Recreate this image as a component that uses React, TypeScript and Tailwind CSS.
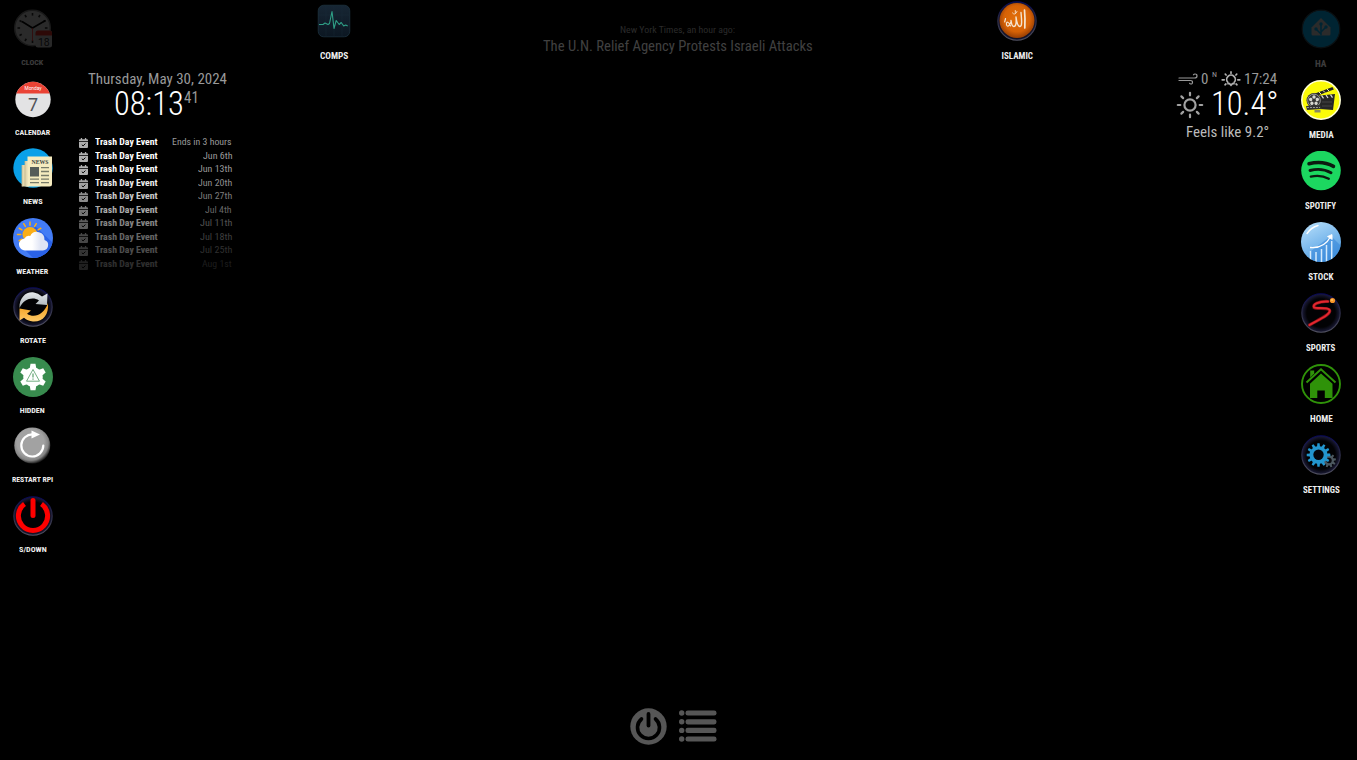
import { useLayoutEffect, useRef, useState, type ReactNode } from "react";

/* One line of text set condensed so that it fills the given width. */
function Fit({ w, className = "", children }: { w: number; className?: string; children: ReactNode }) {
  const ref = useRef<HTMLSpanElement>(null);
  const [scale, setScale] = useState(1);
  useLayoutEffect(() => {
    if (ref.current) setScale(w / ref.current.offsetWidth);
  }, [w]);
  return (
    <span className={`block shrink-0 ${className}`} style={{ width: w }}>
      <span ref={ref} className="inline-block origin-left whitespace-nowrap" style={{ transform: `scaleX(${scale})` }}>
        {children}
      </span>
    </span>
  );
}

function Svg({ children }: { children: ReactNode }) {
  return (
    <svg viewBox="0 0 40 40" className="size-10 shrink-0">
      {children}
    </svg>
  );
}

function DarkDisc({ id, fill = "#020204" }: { id: string; fill?: string }) {
  return (
    <>
      <defs>
        <linearGradient id={id} x1="0" y1="0" x2="0" y2="1">
          <stop offset="0" stopColor="#08085a" />
          <stop offset=".45" stopColor="#2b2b46" />
          <stop offset="1" stopColor="#50505f" />
        </linearGradient>
        <radialGradient id={id + "g"}>
          <stop offset=".74" stopColor={fill} />
          <stop offset="1" stopColor="#1c1c3a" />
        </radialGradient>
      </defs>
      <circle cx="20" cy="20" r="19.2" fill={`url(#${id}g)`} stroke={`url(#${id})`} strokeWidth="1.1" />
    </>
  );
}

const ticks = [0, 30, 60, 90, 120, 150, 180, 210, 240, 270, 300, 330];

const ClockIcon = () => (
  <Svg>
    <circle cx="19.5" cy="19" r="17.8" fill="#a8a8a8" stroke="#666" strokeWidth="1.5" />
    {ticks.map((a) => (
      <path key={a} d="M19.5 4v2.600" stroke="#222" strokeWidth="1.6" transform={`rotate(${a} 19.5 19)`} />
    ))}
    <path d="M9 12.500l10.500 6.500L32.500 11.500" stroke="#000" strokeWidth="1.6" fill="none" />
    <path d="M19.500 19V32" stroke="#c22" strokeWidth=".8" />
    <rect x="22.500" y="21.500" width="16.500" height="17" rx="2.500" fill="#a0a0a0" />
    <path d="M22.500 26.500v-2.500a2.500 2.500 0 0 1 2.500-2.500h11.500a2.500 2.500 0 0 1 2.500 2.500v2.500z" fill="#b3261e" />
    <text x="30.800" y="36.500" fontSize="10.500" textAnchor="middle" fill="#222" fontFamily="Roboto">18</text>
  </Svg>
);

const CalendarIcon = () => (
  <Svg>
    <defs><clipPath id="cal"><circle cx="20" cy="20.500" r="17.700" /></clipPath></defs>
    <g clipPath="url(#cal)">
      <rect width="40" height="40" fill="#e3e3e4" />
      <rect width="40" height="14.500" fill="#ea4335" />
    </g>
    <text x="20" y="11.300" fontSize="4.800" textAnchor="middle" fill="#fff" fontFamily="Roboto">Monday</text>
    <text x="20" y="31.500" fontSize="18" textAnchor="middle" fill="#505257" fontFamily="Roboto">7</text>
  </Svg>
);

const NewsIcon = () => (
  <Svg>
    <circle cx="20" cy="20" r="19.700" fill="#0aa0e8" />
    <path d="M9 17h5v21.500H9zM12 13h4v25.500h-4z" fill="#e5d9b0" />
    <path d="M9 17v21.500M12 13v25" stroke="#bfb58d" strokeWidth=".8" />
    <path d="M14.500 8.500H39V36q0 2.500-2.500 2.500H12q2.500 0 2.500-2.500z" fill="#f5ebbf" />
    <text x="27" y="16.200" fontSize="6.600" fontWeight="700" textAnchor="middle" textLength="17" lengthAdjust="spacingAndGlyphs" fill="#39413f" fontFamily="Liberation Serif">NEWS</text>
    <rect x="17" y="19" width="9" height="9.500" fill="#555c59" />
    <path d="M28 19.700h8M28 23.500h8M28 27.500h8M17 31.200h9M17 34.700h9M28 31.200h8M28 34.700h8" stroke="#777a68" strokeWidth="1.300" />
  </Svg>
);

const WeatherIcon = () => (
  <Svg>
    <defs>
      <clipPath id="wc"><circle cx="20" cy="20" r="20" /></clipPath>
      <linearGradient id="cl"><stop offset=".45" stopColor="#fff" /><stop offset=".75" stopColor="#dfe4f4" /></linearGradient>
    </defs>
    <circle cx="20" cy="20" r="20" fill="#437cf5" />
    <path d="M22 8l18 17v15H20l-9-9z" fill="#2a62e8" clipPath="url(#wc)" />
    <circle cx="17" cy="16.500" r="7.500" fill="#fbae17" />
    {[-120, -90, -60, -30, 0, 30, 60].map((a) => (
      <path key={a} d="M17 7.200V4" stroke="#fbae17" strokeWidth="1.500" strokeLinecap="round" transform={`rotate(${a} 17 16.500)`} />
    ))}
    <path d="M12.500 32.500a6 6 0 0 1-1-12 5 5 0 0 1 5.700-2.500 7.600 7.600 0 0 1 14.300 4A5.400 5.400 0 0 1 29.500 32.500z" fill="url(#cl)" />
  </Svg>
);

const RotateIcon = () => (
  <Svg>
    <defs>
      <linearGradient id="ro" x1="0" y1="0" x2="0" y2="1"><stop offset="0" stopColor="#ef9917" /><stop offset="1" stopColor="#ffc966" /></linearGradient>
      <linearGradient id="rs" x1="0" y1="0" x2="0" y2="1"><stop offset="0" stopColor="#e6e9ec" /><stop offset="1" stopColor="#a7b0b5" /></linearGradient>
    </defs>
    <DarkDisc id="rot" />
    <path d="M6.500 21C6 10 14 4 21 5.500q4 .5 8 4L34.500 6.500 34 18 22.500 17l3.500-3.500C20 9.500 11 11.500 6.500 21z" fill="url(#rs)" />
    <path d="M35 16c1 12-5 19-15 18.500-4-.3-6.500-1.600-9-3.700L6.500 33.500V21.500L18 23.500l-4 3.200C21 31.500 31 28 35 16z" fill="url(#ro)" />
  </Svg>
);

const gear = (n: number, cx: number, cy: number, r: number, len: number, w: number, fill: string) => (
  <g fill={fill}>
    <circle cx={cx} cy={cy} r={r} />
    {Array.from({ length: n }, (_, i) => (
      <path
        key={i}
        d={`M${cx - w / 2} ${cy - r + 1}l${w * 0.12} ${-len - 1}h${w * 0.76}l${w * 0.12} ${len + 1}z`}
        transform={`rotate(${(360 / n) * i} ${cx} ${cy})`}
      />
    ))}
  </g>
);

const HiddenIcon = () => (
  <Svg>
    <circle cx="20" cy="20" r="20" fill="#388b4e" />
    {gear(6, 20, 20, 9.8, 3.4, 6.5, "#fff")}
    <path d="M20 12.500l-6.500 11.700h13z" fill="none" stroke="#388b4e" strokeWidth=".7" />
    <path d="M20 16.500v4M20 21.500v1.200" stroke="#388b4e" strokeWidth="1" />
  </Svg>
);

const RestartIcon = () => (
  <Svg>
    <defs>
      <radialGradient id="rr" cx=".45" cy=".42" r=".58">
        <stop offset=".65" stopColor="#a2a2a2" /><stop offset=".85" stopColor="#858585" /><stop offset="1" stopColor="#222" />
      </radialGradient>
    </defs>
    <circle cx="19.300" cy="19.500" r="18" fill="url(#rr)" />
    <path d="M30.300 19.500A11 11 0 1 1 20 8.500" fill="none" stroke="#fff" strokeWidth="2.200" strokeLinecap="round" />
    <path d="M18.500 4.500l8.500 4-8.500 4z" fill="#fff" />
  </Svg>
);

const PowerIcon = () => (
  <Svg>
    <DarkDisc id="pow" />
    <path d="M11.500 8a14.600 14.600 0 1 0 17 0" fill="none" stroke="#fe0000" strokeWidth="5" />
    <path d="M20 4.500V19.500" stroke="#fe0000" strokeWidth="5" strokeLinecap="round" />
  </Svg>
);

const HaIcon = () => (
  <Svg>
    <circle cx="20" cy="20" r="18.800" fill="#038fc7" stroke="#29404c" strokeWidth="1.200" />
    <path d="M20 9l9.500 9.500V25q0 1.500-1.500 1.500H12q-1.500 0-1.500-1.500v-6.500z" fill="#aaa" />
    <path d="M20 15v11.500M20 25l-5-5M20 23l5-5" stroke="#038fc7" strokeWidth="1.600" />
    <g fill="#038fc7"><circle cx="20" cy="15" r="1.700" /><circle cx="15" cy="20" r="1.700" /><circle cx="25" cy="18" r="1.700" /></g>
  </Svg>
);

const MediaIcon = () => (
  <Svg>
    <circle cx="20" cy="20" r="19.200" fill="#fbfb08" stroke="#ffffd8" strokeWidth="1.500" />
    <path d="M14 13.500L31.500 7l1.300 2.500L15.500 16z" fill="#222" />
    <path d="M18 12l2 2M22 10.500l2 2M26 9l2 2" stroke="#e8e8c0" strokeWidth="1" />
    <path d="M19 15.500l15-1.500-2 16-13-1z" fill="#262626" />
    <path d="M20.500 15.300l2 3M25 15l2 3M29.500 14.600l2 3" stroke="#ddd" strokeWidth="1.200" />
    <path d="M21 22h10M21 26h10" stroke="#555" strokeWidth=".7" />
    <circle cx="13" cy="20.500" r="7.500" fill="#333" />
    <circle cx="13" cy="20.500" r="6.300" fill="none" stroke="#aaa" strokeWidth=".8" />
    {[0, 72, 144, 216, 288].map((a) => (
      <circle key={a} cx="13" cy="17" r="1.700" fill="#d7d7cf" transform={`rotate(${a} 13 20.500)`} />
    ))}
    <path d="M5 26l14-1 2 4-15 1z" fill="#333" />
    <path d="M13.500 30h6v2.500h-6z" fill="#8a8a60" />
    <path d="M6 27.500h13" stroke="#aaa" strokeWidth=".8" strokeDasharray="2 1" />
  </Svg>
);

const SpotifyIcon = () => (
  <Svg>
    <circle cx="20" cy="19.500" r="19.800" fill="#1cd760" />
    <g fill="none" stroke="#0c1a10" strokeLinecap="round">
      <path d="M8 12.800c8.500-2.300 17.500-1.300 24.500 2.600" strokeWidth="3.500" />
      <path d="M9 19.500c7.500-2 15-1.200 21 2.300" strokeWidth="2.900" />
      <path d="M9.800 25.600c6.300-1.500 12.500-.9 18 2.200" strokeWidth="2.300" />
    </g>
  </Svg>
);

const StockIcon = () => (
  <Svg>
    <defs>
      <linearGradient id="st" x1=".2" y1="0" x2=".7" y2="1"><stop offset="0" stopColor="#b4ddfa" /><stop offset="1" stopColor="#4898e0" /></linearGradient>
      <clipPath id="sc"><circle cx="20" cy="20" r="20" /></clipPath>
    </defs>
    <circle cx="20" cy="20" r="20" fill="url(#st)" />
    <g clipPath="url(#sc)">
      <path d="M30 14l10 10v16H10V29z" fill="#3585d8" opacity=".55" />
      <path d="M6 11.500Q10 5.500 17 3.500" stroke="#fff" strokeWidth="1.400" fill="none" strokeLinecap="round" />
      <path d="M9.500 29v12M15 30v12M20.500 27v14M25.500 23v17M30.700 19v18" stroke="#d3eafd" strokeWidth="1.500" />
      <path d="M9 25.500Q23 27 30 14" stroke="#fff" strokeWidth="1.300" fill="none" />
      <path d="M26.500 14.500l4.500-2 .2 5z" stroke="#fff" strokeWidth=".8" fill="#fff" />
    </g>
  </Svg>
);

const SportsIcon = () => (
  <Svg>
    <DarkDisc id="sp" />
    <path d="M27 8.500C18 8 11 11.500 13 14.500c2 2 13-.5 15.500 2.500C31 21 17 27 8.500 32" fill="none" stroke="#7c1016" strokeWidth="3.200" strokeLinecap="round" strokeLinejoin="round" />
    <path d="M27 8.500C18 8 11 11.500 13 14.300c2 1.700 13-.5 15.500 2.500C31 21 17 27 8.500 32" fill="none" stroke="#e3272f" strokeWidth="1.900" strokeLinecap="round" />
    <circle cx="31.500" cy="7.500" r="2.600" fill="#f79428" />
    <circle cx="31" cy="7" r="1.100" fill="#ffc35c" />
  </Svg>
);

const HomeIcon = () => (
  <Svg>
    <circle cx="20" cy="20" r="19" fill="#000" stroke="#2f9209" strokeWidth="1.900" />
    <path d="M9.200 6.500h4V9.500l-4 4z" fill="#2f9209" />
    <path d="M5.500 18.500L20 5.300l14.500 13.200" fill="none" stroke="#2f9209" strokeWidth="2" />
    <path d="M20 9.500l11.500 10.300V34h-7.700v-7.500h-7.500V34H9V19.800z" fill="#2f9209" />
  </Svg>
);

const SettingsIcon = () => (
  <Svg>
    <DarkDisc id="set" />
    {gear(9, 28, 25.5, 4.9, 2, 2.5, "#4d5960")}
    <circle cx="28" cy="25.500" r="2.700" fill="#08080c" />
    {gear(12, 17.5, 20, 9, 2.8, 3, "#2396cf")}
    <circle cx="17.500" cy="19.700" r="5.200" fill="#05070c" />
  </Svg>
);

const CompsIcon = () => (
  <Svg>
    <defs><linearGradient id="co" x1="0" y1="0" x2="0" y2="1"><stop offset="0" stopColor="#172634" /><stop offset="1" stopColor="#0c1722" /></linearGradient></defs>
    <rect x="4.200" y="4.200" width="31.600" height="31.600" rx="5.500" fill="url(#co)" stroke="#203743" strokeWidth=".7" />
    <path d="M4.500 14h31M4.500 24h31M12 4.500v31M20 4.500v31M28 4.500v31" stroke="#1c3040" strokeWidth=".3" />
    <path d="M5 23.500h4l2-1.500 3 1.500 1.500-1L18 10.500l2 17 2.200-8 3 4 2-2 2.500 3.500 2-1 2 1" fill="none" stroke="#2f9f86" strokeWidth="1.100" strokeLinejoin="round" />
  </Svg>
);

const IslamicIcon = () => (
  <Svg>
    <defs><radialGradient id="is" cx=".5" cy=".45" r=".62"><stop offset="0" stopColor="#e2700a" /><stop offset=".6" stopColor="#d76206" /><stop offset="1" stopColor="#7e3003" /></radialGradient></defs>
    <DarkDisc id="isl" />
    <circle cx="20" cy="19.500" r="17.500" fill="url(#is)" />
    <g fill="none" stroke="#f5e4cf" strokeLinecap="round" strokeLinejoin="round">
      <path d="M27.500 9q.8 8 .3 18" strokeWidth="1.700" />
      <path d="M24 11.500c.5 6 1.500 14-1 14s-3.500-6-4-9.500c.5 6 0 9.500-2.200 9.500s-2.300-3-2.800-6" strokeWidth="1.400" />
      <path d="M14 21c-1 3-4 6-4.500 2.500s2.500-3 4 1.500M8.500 17.500l-.8 3.500" strokeWidth="1.200" />
      <path d="M15.500 12q2.500 3 4.500-1.500M18.300 9.500v2" strokeWidth=".9" />
    </g>
  </Svg>
);

type Item = { label: string; w: number; icon: ReactNode; dim?: boolean };

const leftItems: Item[] = [
  { label: "CLOCK", w: 22, icon: <ClockIcon />, dim: true },
  { label: "CALENDAR", w: 35.5, icon: <CalendarIcon /> },
  { label: "NEWS", w: 19.5, icon: <NewsIcon /> },
  { label: "WEATHER", w: 32, icon: <WeatherIcon /> },
  { label: "ROTATE", w: 25.5, icon: <RotateIcon /> },
  { label: "HIDDEN", w: 25, icon: <HiddenIcon /> },
  { label: "RESTART RPI", w: 41.5, icon: <RestartIcon /> },
  { label: "S/DOWN", w: 27.5, icon: <PowerIcon /> },
];

const rightItems: Item[] = [
  { label: "HA", w: 11.5, icon: <HaIcon />, dim: true },
  { label: "MEDIA", w: 24.5, icon: <MediaIcon /> },
  { label: "SPOTIFY", w: 31.5, icon: <SpotifyIcon /> },
  { label: "STOCK", w: 25, icon: <StockIcon /> },
  { label: "SPORTS", w: 29.5, icon: <SportsIcon /> },
  { label: "HOME", w: 22.5, icon: <HomeIcon /> },
  { label: "SETTINGS", w: 36.5, icon: <SettingsIcon /> },
];

const events = ["Ends in 3 hours", "Jun 6th", "Jun 13th", "Jun 20th", "Jun 27th", "Jul 4th", "Jul 11th", "Jul 18th", "Jul 25th", "Aug 1st"];
const eventWidths = [60, 29.5, 34.5, 34.5, 34.5, 27, 32, 32, 32, 30];
const eventOpacity = [1, 1, 1, 0.93, 0.8, 0.67, 0.53, 0.4, 0.3, 0.18];

const EventIcon = () => (
  <svg viewBox="0 0 9 10" className="mt-[3px] h-[10px] w-[9px] shrink-0">
    <path d="M0 3.300V2.200q0-.9.900-.9h.9V0h1.300v1.300h2.800V0h1.300v1.300h.9q.9 0 .9.900v1.100zM0 4h9v5q0 1-1 1H1q-1 0-1-1z" fill="#b0b0b0" />
    <path d="M2.800 6.700l1.300 1.200 2.300-2.300" fill="none" stroke="#000" strokeWidth="1" />
  </svg>
);

export default function App() {
  return (
    <div className="flex h-[760px] w-[1357px] overflow-hidden bg-black font-['Roboto_Condensed',Roboto,sans-serif] text-white">
      <nav className="flex w-[65px] shrink-0 flex-col pt-[9px]">
        {leftItems.map((it) => (
          <div key={it.label} className={`flex h-[69.5px] shrink-0 flex-col items-center ${it.dim ? "opacity-25" : ""}`}>
            {it.icon}
            <Fit w={it.w} className="mt-[8px] mr-[.5px] text-[8px] leading-[12px] font-bold text-[#eee]">{it.label}</Fit>
          </div>
        ))}
      </nav>

      <section className="w-[180px] shrink-0 pt-[69px] pl-[14px]">
        <Fit w={139} className="ml-[9px] text-[15px] leading-[20px] text-[#999]">Thursday, May 30, 2024</Fit>
        <div className="ml-[35px] flex h-[32px] items-start">
          <Fit w={70} className="text-[32.5px] leading-[31px] font-light">08:13</Fit>
          <Fit w={15} className="text-[16px] leading-[18px] text-[#999]">41</Fit>
        </div>
        <div className="mt-[14px] w-[153px]">
          {events.map((when, i) => (
            <div key={when} className="flex h-[13.55px] items-start" style={{ opacity: eventOpacity[i] }}>
              <EventIcon />
              <Fit w={63} className="ml-[6.5px] text-[9.5px] leading-[14px] font-bold">Trash Day Event</Fit>
              <Fit w={eventWidths[i]} className="ml-auto text-[9.5px] leading-[14px] text-[#999]">{when}</Fit>
            </div>
          ))}
        </div>
      </section>

      <div className="flex w-[178px] shrink-0 flex-col items-center pt-[1px]">
        <CompsIcon />
        <Fit w={28} className="mt-[9px] text-[9px] leading-[12px] font-bold text-[#eee]">COMPS</Fit>
      </div>

      <main className="flex w-[510px] shrink-0 flex-col items-center justify-between pt-[23px] pb-[15px]">
        <header className="flex flex-col items-center">
          <Fit w={115} className="mr-[1px] text-[9.5px] leading-[14px] text-[#2b2b2b]">New York Times, an hour ago:</Fit>
          <Fit w={270} className="text-[15.5px] leading-[18px] text-[#404040]">The U.N. Relief Agency Protests Israeli Attacks</Fit>
        </header>
        <div className="mr-[9px] flex items-center gap-[12px]">
          <svg viewBox="0 0 37 37" className="size-[37px]">
            <circle cx="18.500" cy="18.500" r="18.200" fill="#565656" />
            <path d="M11.500 11a11 11 0 1 0 14 0" fill="none" stroke="#000" strokeWidth="3.600" strokeLinecap="round" />
            <path d="M18.500 6V17.500" stroke="#000" strokeWidth="3.800" strokeLinecap="round" />
          </svg>
          <svg viewBox="0 0 38 34" className="mb-[2px] h-[34px] w-[38px]">
            {[4, 12.8, 21.4, 30].map((y) => (
              <g key={y} fill="#565656">
                <circle cx="2.700" cy={y} r="2.700" />
                <rect x="6.500" y={y - 2.6} width="31" height="5.200" rx="2.300" />
              </g>
            ))}
          </svg>
        </div>
      </main>

      <div className="flex w-[168px] shrink-0 flex-col items-center pt-[1px]">
        <IslamicIcon />
        <Fit w={31} className="mt-[9px] text-[9px] leading-[12px] font-bold text-[#eee]">ISLAMIC</Fit>
      </div>

      <section className="flex w-[184px] shrink-0 flex-col items-end pt-[69px] pr-[7px]">
        <div className="mr-[1px] flex h-[20px] items-center text-[#999]">
          <svg viewBox="0 0 20 12" className="h-[12px] w-[20px]" fill="none" stroke="#999" strokeWidth="1.200" strokeLinecap="round">
            <path d="M1 5h15.500q2.500 0 2.500-2t-2-2q-1 0-1.500.8M1 7.500h11.500q2 0 2 1.800t-1.700 1.700q-.8 0-1.200-.7" />
          </svg>
          <Fit w={7} className="ml-[3px] text-[15px] leading-[20px]">0</Fit>
          <Fit w={5} className="mb-[8px] ml-[4px] text-[8px] leading-[12px]">N</Fit>
          <svg viewBox="0 0 20 16" className="ml-[4px] h-[16px] w-[20px]" fill="none" stroke="#b0b0b0" strokeWidth="1.700" strokeLinecap="round">
            <path d="M6.800 11.300a4.300 4.300 0 1 1 6.400 0M10 .9v1.300M4.300 3.200l.8.800M15.700 3.200l-.8.800M1.200 8.800h2M16.800 8.800h2M4 13.800l.9-.8M16 13.800l-.9-.8M7 12.700h1.500l1.500 1.500 1.500-1.500H13" />
          </svg>
          <Fit w={33} className="ml-[3px] text-[15px] leading-[20px]">17:24</Fit>
        </div>
        <div className="flex h-[32px] items-center">
          <svg viewBox="0 0 28 28" className="mb-[1px] size-[28px]" fill="none" stroke="#a2a2a2" strokeWidth="2.200" strokeLinecap="round">
            <circle cx="14" cy="14" r="5.600" />
            {[0, 45, 90, 135, 180, 225, 270, 315].map((a) => (
              <path key={a} d="M14 4.300V1.800" transform={`rotate(${a} 14 14)`} />
            ))}
          </svg>
          <Fit w={67} className="mb-[1px] ml-[7px] text-[32.5px] leading-[31px] font-light">10.4°</Fit>
        </div>
        <Fit w={83} className="mt-[1px] mr-[9px] text-[15px] leading-[20px] text-[#bbb]">Feels like 9.2°</Fit>
      </section>

      <nav className="flex w-[72px] shrink-0 flex-col pt-[9px]">
        {rightItems.map((it) => (
          <div key={it.label} className={`flex h-[71px] shrink-0 flex-col items-center ${it.dim ? "opacity-25" : ""}`}>
            {it.icon}
            <Fit w={it.w} className="mt-[9px] mr-[.5px] text-[9px] leading-[12px] font-bold text-[#eee]">{it.label}</Fit>
          </div>
        ))}
      </nav>
    </div>
  );
}
